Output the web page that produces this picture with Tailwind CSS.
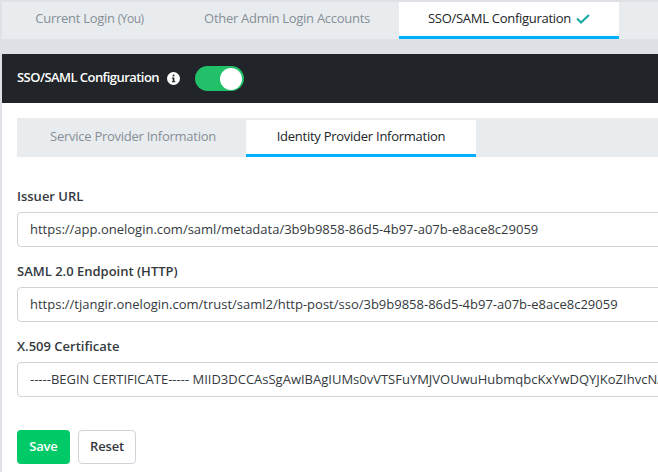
<!DOCTYPE html>
<html lang="en">
<head>
  <meta charset="utf-8" />
  <meta name="viewport" content="width=device-width, initial-scale=1.0" />
  <title>SSO/SAML Configuration</title>
  <script src="https://cdn.jsdelivr.net/npm/@tailwindcss/browser@4"></script>
</head>
<body class="h-[472px] overflow-hidden bg-[#dee2e6] font-['Open_Sans',sans-serif]">
  <div class="w-[656px] overflow-hidden ml-[2px] mt-[2px]">
    <!-- top tabs -->
    <nav class="flex h-[37px] bg-[#e9ecef] text-[13px] font-medium tracking-[-0.28px] text-[#868e96]">
      <a href="#" class="flex w-[173px] items-center justify-center pb-[3px] pl-[2px]">
        <span>Current Login <span class="text-[12px] tracking-[-0.5px]">(You)</span></span>
      </a>
      <a href="#" class="flex w-[224px] items-center justify-center pb-[3px]">Other Admin Login Accounts</a>
      <a href="#" class="flex w-[220px] items-center justify-center gap-[5px] border-b-[3px] border-[#00b0ff] bg-white text-[#212529]">
        SSO/SAML Configuration
        <svg width="14" height="10" viewBox="0 0 14 10" fill="none"><path d="M1 4.5 5 8.5 13 1" stroke="#14a8a0" stroke-width="2"/></svg>
      </a>
    </nav>

    <div class="mt-[15px] bg-white">
      <!-- dark header -->
      <div class="flex h-[49px] items-center bg-[#212529] pl-[15px] text-[13px] font-semibold tracking-[-0.55px] text-white">
        <span class="pb-[2px]">SSO/SAML Configuration</span>
        <svg class="ml-[8px]" width="13" height="13" viewBox="0 0 13 13"><circle cx="6.5" cy="6.5" r="6.5" fill="#fff"/><rect x="5.6" y="2.5" width="1.9" height="1.9" rx="0.9" fill="#212529"/><path d="M4.8 5.4H7.4V9.2H8.3V10.3H4.8V9.2H5.7V6.5H4.8Z" fill="#212529"/></svg>
        <button class="ml-[15px] flex h-[25px] w-[49px] items-center justify-end rounded-full bg-[#22c069] pr-[2px]">
          <span class="h-[22px] w-[22px] rounded-full bg-white"></span>
        </button>
      </div>

      <div class="pl-[15px] pt-[15px]">
        <!-- inner tabs -->
        <div class="flex h-[39px] items-end bg-[#e9ecef] text-[13px] font-medium tracking-[-0.26px]">
          <a href="#" class="flex h-[37px] w-[229px] items-center justify-center pb-[3px] pl-[3px] text-[#868e96]">Service Provider Information</a>
          <a href="#" class="flex h-[37px] w-[230px] items-center justify-center border-b-[3px] border-[#00b0ff] bg-white text-[#212529]">Identity Provider Information</a>
        </div>

        <form class="pt-[29px] text-[13px]">
          <label class="block h-[26px] font-semibold leading-[20px] text-[#343a40]">Issuer URL</label>
          <input type="text" value="https://app.onelogin.com/saml/metadata/3b9b9858-86d5-4b97-a07b-e8ace8c29059" class="block h-[35px] w-[670px] rounded-[4px] border border-[#ced4da] bg-white px-[12px] pb-[2px] text-[#343a40]" />

          <label class="mt-[14px] block h-[26px] font-semibold leading-[20px] text-[#343a40]">SAML 2.0 Endpoint (HTTP)</label>
          <input type="text" value="https://tjangir.onelogin.com/trust/saml2/http-post/sso/3b9b9858-86d5-4b97-a07b-e8ace8c29059" class="block h-[35px] w-[670px] rounded-[4px] border border-[#ced4da] bg-white px-[12px] pb-[2px] text-[#343a40]" />

          <label class="mt-[14px] block h-[26px] font-semibold leading-[20px] text-[#343a40]">X.509 Certificate</label>
          <input type="text" value="-----BEGIN CERTIFICATE----- MIID3DCCAsSgAwIBAgIUMs0vVTSFuYMJVOUwuHubmqbcKxYwDQYJKoZIhvcNAQEF" class="block h-[35px] w-[670px] rounded-[4px] border border-[#ced4da] bg-white px-[12px] pb-[2px] text-[#343a40]" />

          <div class="mt-[33px] flex gap-[8px] pb-[8px]">
            <button type="button" class="h-[34px] w-[53px] rounded-[4px] bg-[#00c968] font-semibold tracking-[-0.2px] text-white">Save</button>
            <button type="button" class="h-[34px] w-[58px] rounded-[4px] border border-[#ced4da] bg-white font-semibold tracking-[-0.2px] text-[#343a40]">Reset</button>
          </div>
        </form>
      </div>
    </div>
  </div>
</body>
</html>
